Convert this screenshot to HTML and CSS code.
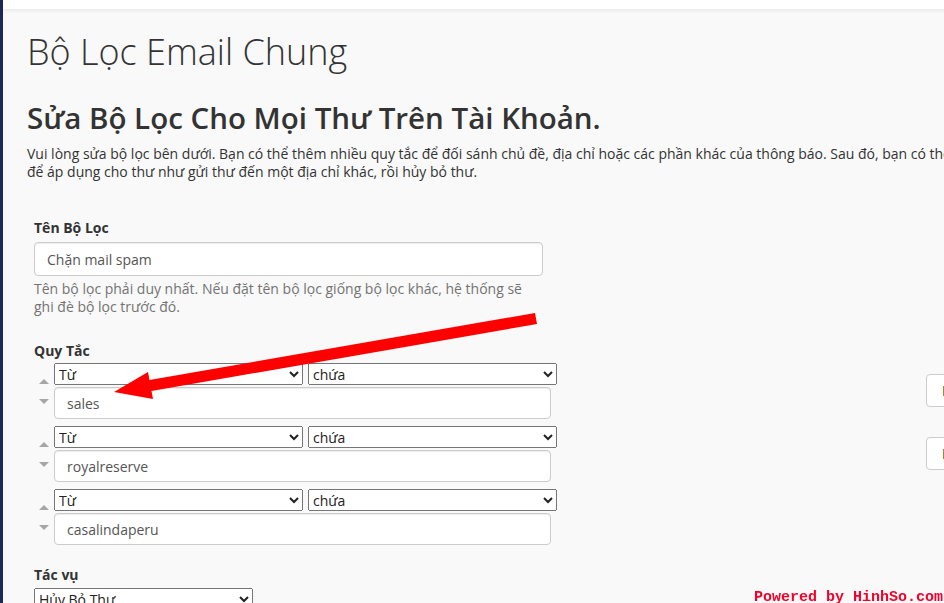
FILE: index.html
```html
<!DOCTYPE html>
<html>
<head>
    <meta charset="utf-8">
    <title>Bộ Lọc Email Chung</title>
    <link rel="stylesheet" href="styles.css">
</head>
<body>
    <div class="page">
        <div class="sidebar"></div>
        <div class="main">
            <div class="topbar"></div>
            <div class="content">
                <h1>Bộ Lọc Email Chung</h1>
                <h2>Sửa Bộ Lọc Cho Mọi Thư Trên Tài Khoản.</h2>
                <p class="intro">Vui lòng sửa bộ lọc bên dưới. Bạn có thể thêm nhiều quy tắc để đối sánh chủ đề, địa chỉ hoặc các phần khác của thông báo. Sau đó, bạn có thể thêm nhiều tác vụ để áp dụng cho thư như gửi thư đến một địa chỉ khác, rồi hủy bỏ thư.</p>

                <form class="filter-form">
                    <div class="form-group">
                        <label class="name-label" for="filterName">Tên Bộ Lọc</label>
                        <input class="form-control name-input" id="filterName" type="text" value="Chặn mail spam">
                        <div class="help-block">Tên bộ lọc phải duy nhất. Nếu đặt tên bộ lọc giống bộ lọc khác, hệ thống sẽ ghi đè bộ lọc trước đó.</div>
                    </div>

                    <label class="rules-label">Quy Tắc</label>
                    <div class="rules">
                        <div class="rule">
                            <div class="rule-move">
                                <span class="move-up"></span>
                                <span class="move-down"></span>
                            </div>
                            <div class="rule-fields">
                                <div class="rule-selects">
                                    <select class="rule-select"><option>Từ</option></select>
                                    <select class="rule-select"><option>chứa</option></select>
                                </div>
                                <input class="form-control rule-input" type="text" value="sales">
                            </div>
                            <div class="rule-buttons">
                                <button type="button" class="btn">Bỏ</button>
                            </div>
                        </div>
                        <div class="rule">
                            <div class="rule-move">
                                <span class="move-up"></span>
                                <span class="move-down"></span>
                            </div>
                            <div class="rule-fields">
                                <div class="rule-selects">
                                    <select class="rule-select"><option>Từ</option></select>
                                    <select class="rule-select"><option>chứa</option></select>
                                </div>
                                <input class="form-control rule-input" type="text" value="royalreserve">
                            </div>
                            <div class="rule-buttons">
                                <button type="button" class="btn">Bỏ</button>
                            </div>
                        </div>
                        <div class="rule">
                            <div class="rule-move">
                                <span class="move-up"></span>
                                <span class="move-down"></span>
                            </div>
                            <div class="rule-fields">
                                <div class="rule-selects">
                                    <select class="rule-select"><option>Từ</option></select>
                                    <select class="rule-select"><option>chứa</option></select>
                                </div>
                                <input class="form-control rule-input" type="text" value="casalindaperu">
                            </div>
                        </div>
                    </div>

                    <label class="actions-label">Tác vụ</label>
                    <select class="action-select"><option>Hủy Bỏ Thư</option></select>
                </form>
            </div>
        </div>
    </div>

    <svg class="arrow" width="944" height="603" viewBox="0 0 944 603">
        <polygon points="535,313 537,324 151.5,391 153,399 114,392 148,372 149.5,380" fill="#ff0000"/>
    </svg>

    <div class="watermark">Powered by HinhSo.com</div>
</body>
</html>
```

FILE: styles.css
```css
body {
    margin: 0;
    background: #f9f9f9;
    font-family: "Open Sans", sans-serif;
    font-size: 14px;
    line-height: 18px;
    color: #333;
    overflow: hidden;
}

.page {
    display: flex;
    min-height: 100vh;
}

.sidebar {
    width: 3px;
    flex-shrink: 0;
    background: #1f2858;
}

.main {
    flex: 1;
}

.topbar {
    height: 9px;
    background: #fff;
    box-shadow: 0 2px 4px rgba(0,0,0,0.06);
}

.content {
    width: 1062px;
    padding-left: 24px;
}

h1 {
    margin: 23px 0 0 0;
    font-size: 36px;
    font-weight: 300;
    line-height: 40px;
}

h2 {
    margin: 29px 0 0 0;
    font-size: 29.5px;
    font-weight: 600;
    line-height: 33px;
}

.intro {
    margin: 11px 0 0 0;
}

.filter-form {
    padding-left: 7px;
    margin-top: 38px;
}

label {
    display: block;
    font-weight: bold;
}

.name-label {
    margin-bottom: 5px;
}

.form-group {
    width: 509px;
}

.form-control {
    display: block;
    box-sizing: border-box;
    background: #fff;
    border: 1px solid #ccc;
    border-radius: 4px;
    box-shadow: inset 0 1px 1px rgba(0,0,0,0.075);
    padding: 0 12px;
    font-family: "Open Sans", sans-serif;
    font-size: 14px;
    color: #555;
}

.name-input {
    width: 509px;
    height: 34px;
}

.help-block {
    margin-top: 4px;
    color: #737373;
}

.rules-label {
    margin-top: 26px;
    margin-bottom: 3px;
}

.rule {
    display: flex;
    width: 960px;
    margin-bottom: 7px;
}

.rule-move {
    width: 20px;
    display: flex;
    flex-direction: column;
    align-items: center;
}

.move-up,
.move-down {
    width: 0;
    height: 0;
    border-left: 5px solid transparent;
    border-right: 5px solid transparent;
}

.move-up {
    margin-top: 16px;
    border-bottom: 5px solid #a6a6a6;
}

.move-down {
    margin-top: 15px;
    border-top: 5px solid #a6a6a6;
}

.rule-selects {
    display: flex;
    gap: 5px;
    margin-bottom: 2px;
}

.rule-select {
    width: 249px;
    height: 22px;
    font-family: "Open Sans", sans-serif;
    font-size: 14px;
    color: #222;
}

.rule-input {
    width: 497px;
    height: 32px;
}

.rule-buttons {
    margin-left: auto;
    padding-top: 11px;
}

.btn {
    width: 68px;
    height: 33px;
    box-sizing: border-box;
    padding: 0 0 0 15px;
    text-align: left;
    background: #fff;
    border: 1px solid #ccc;
    border-radius: 4px;
    font-family: "Open Sans", sans-serif;
    font-size: 14px;
    color: #333;
}

/* .rule margin-bottom collapses into this one */
.actions-label {
    margin-top: 21px;
    margin-bottom: 4px;
}

.action-select {
    width: 219px;
    height: 22px;
    font-family: "Open Sans", sans-serif;
    font-size: 14px;
    color: #222;
}

.arrow {
    position: absolute;
    top: 0;
    left: 0;
    pointer-events: none;
}

.watermark {
    position: fixed;
    right: 1px;
    bottom: -3px;
    font-family: "Liberation Mono", monospace;
    font-weight: bold;
    font-size: 15px;
    line-height: 17px;
    color: #f5002a;
}
```
